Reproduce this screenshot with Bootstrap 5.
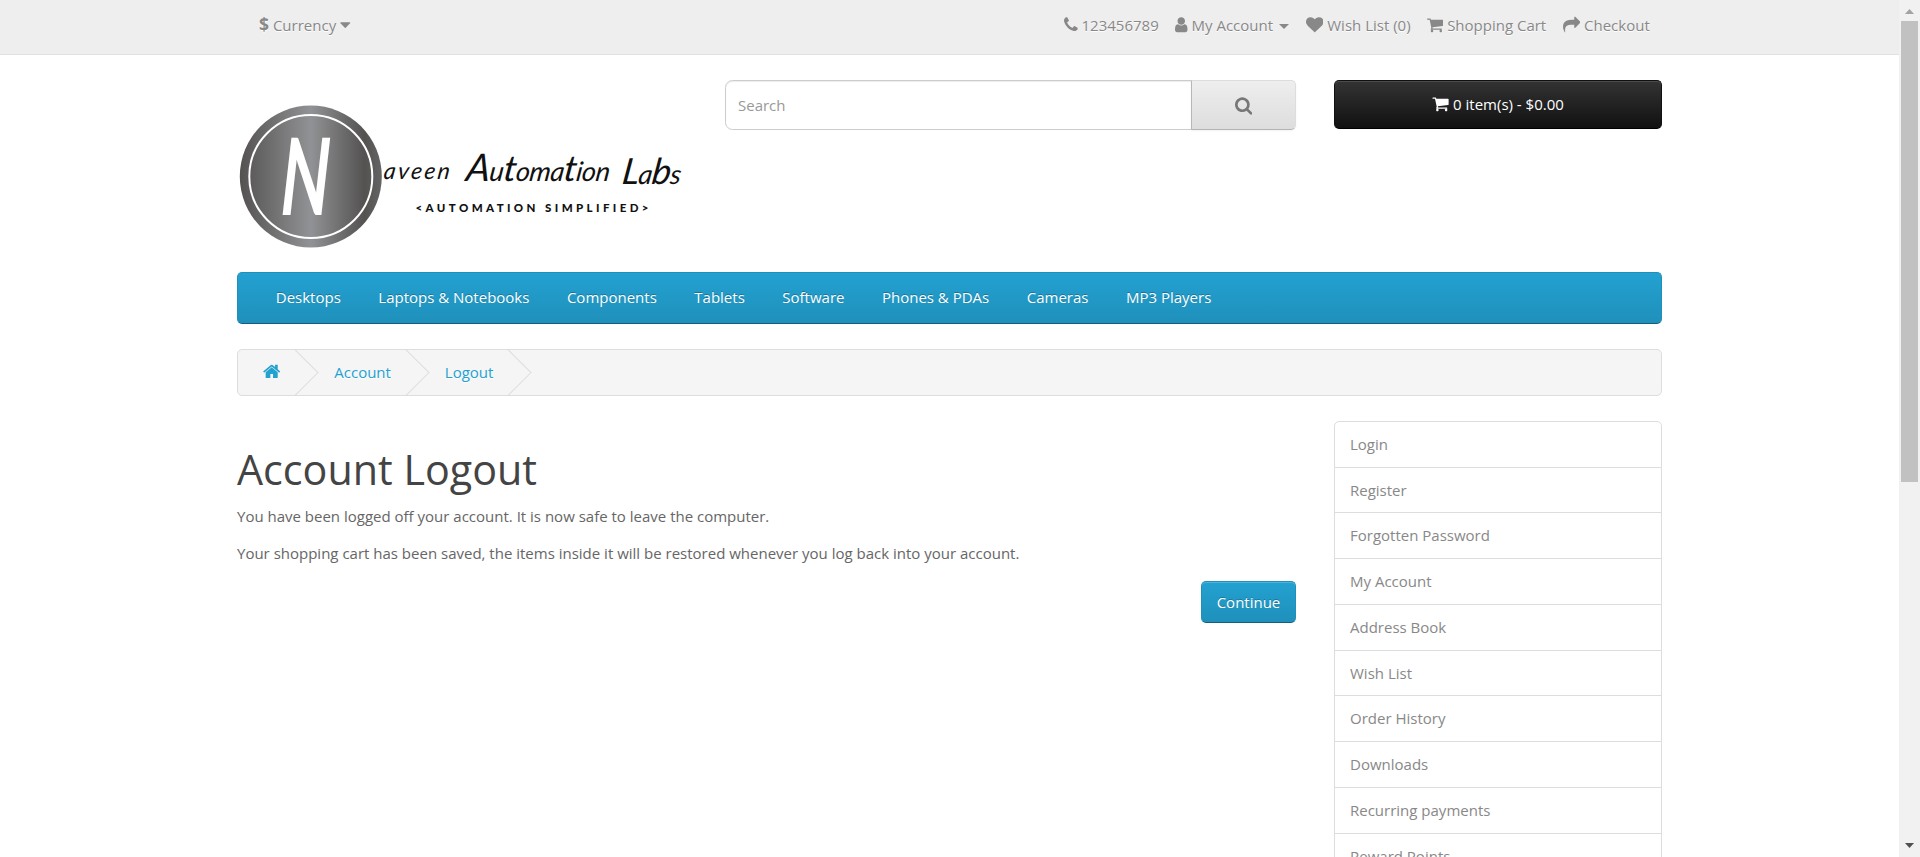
<!DOCTYPE html>
<html lang="en">
<head>
<meta charset="utf-8">
<title>Account Logout</title>
<meta name="viewport" content="width=device-width, initial-scale=1">
<link href="https://cdn.jsdelivr.net/npm/bootstrap@5.3.0/dist/css/bootstrap.min.css" rel="stylesheet">
<style>
  html, body { height: 100%; overflow: hidden; }
  body { font: 400 15px/20px "Open Sans", sans-serif; color: #666; background: #fff; }
  a { text-decoration: none; }
  .page { height: 857px; }
  .shop { width: 1425px; margin-left: 237px; }
  .fa { fill: currentColor; height: 17.5px; vertical-align: -2.5px; }
  .topbar { height: 55px; background: #eee; border-bottom: 1px solid #e2e2e2; color: #888; text-shadow: 0 1px 0 #fff; }
  .topbar a { color: #888; }
  .currency { padding: 14px 0 0 22px; }
  .currency strong { font-size: 17.5px; line-height: 20px; }
  .toplinks { padding: 15px 6px 0 0; }
  .toplinks li { display: inline-block; padding: 0 6.25px; }
  .caret-sm { display: inline-block; border: 5px solid transparent; border-top-color: #888; border-bottom: 0; margin-left: 2.5px; vertical-align: 2px; }
  .headrow { height: 192px; margin-top: 25px; }
  .logo { width: 450px; height: 150px; margin-top: 20px; }
  .search { width: 571px; height: 50px; margin-left: 38px; flex-wrap: nowrap; }
  .search .form-control { font-size: 15px; border: 1px solid #ccc; border-radius: 7.5px 0 0 7.5px; padding: 0 12px; box-shadow: inset 0 1px 1px rgba(0,0,0,.075); }
  .search .form-control::placeholder { color: #999; }
  .search .btn { width: 105px; border: 1px solid #ddd; border-color: #ddd #ddd #b3b3b3 #b7b7b7; border-radius: 0 5px 5px 0; color: #777; background: linear-gradient(#eee, #ddd); padding: 0; box-shadow: 0 1px 2px rgba(0,0,0,.05); }
  .search .fa { height: 18.75px; vertical-align: -3.5px; }
  .cartbtn { width: 328px; height: 49px; margin-left: 38px; padding: 0; font-size: 15px; color: #fff; border: 1px solid #111; border-bottom-color: #000; border-radius: 5px; background: linear-gradient(#333, #111); box-shadow: inset 0 1px 0 rgba(255,255,255,.12); }
  .cartbtn:hover { color: #fff; }
  .menu { height: 52px; padding: 0 19px; border: 1px solid #1f90bb; border-bottom-color: #145e7a; border-radius: 5px; background: linear-gradient(#23a1d1, #1f90bb); }
  .menu .nav-link { color: #fff; padding: 14px 18.75px; line-height: 20px; text-shadow: 0 -1px 0 rgba(0,0,0,.25); }
  .crumbs { height: 47px; margin: 25px 0 0; padding: 0; border: 1px solid #ddd; border-radius: 5px; background: #f5f5f5; overflow: hidden; list-style: none; }
  .crumbs li { position: relative; display: inline-block; padding: 0 25px; line-height: 45px; text-shadow: 0 1px 0 #fff; }
  .crumbs li::after { content: ""; position: absolute; right: -6.5px; top: 6.2px; width: 32.5px; height: 32.5px; border: 1px solid #ddd; border-width: 1px 1px 0 0; transform: rotate(45deg); }
  .crumbs a { color: #23a1d1; }
  .crumbs .fa { height: 18.75px; vertical-align: -3px; }
  .content-row { margin-top: 25.25px; }
  .maincol { width: 1059px; }
  h1 { font-size: 41.25px; line-height: 45px; font-weight: 400; color: #444; margin: 25.25px 0 14.5px; }
  .maincol p { margin: 0 0 17px; line-height: 20px; }
  .go { height: 42px; width: 95px; margin-top: 1px; padding: 0; font-size: 15px; color: #fff; border: 1px solid #1f90bb; border-bottom-color: #145e7a; border-radius: 5px; background: linear-gradient(#23a1d1, #1f90bb); box-shadow: inset 0 1px 0 rgba(255,255,255,.2); text-shadow: 0 -1px 0 rgba(0,0,0,.25); }
  .side { width: 328px; --bs-list-group-border-color: #ddd; --bs-list-group-border-radius: 5px; }
  .side .list-group-item { height: 45.75px; padding: 12px 15px; line-height: 21px; color: #888; }
  .side .list-group-item:first-child { height: 46.25px; }
  .scroller { width: 21px; background: #f1f1f1; }
  .thumb { width: 17px; height: 461px; background: #c1c1c1; }
</style>
</head>
<body>
<svg width="0" height="0" class="position-absolute">
  <defs>
    <symbol id="cart" viewBox="64 0 1664 1792"><path d="M704 1536q0 52-38 90t-90 38-90-38-38-90 38-90 90-38 90 38 38 90zm896 0q0 52-38 90t-90 38-90-38-38-90 38-90 90-38 90 38 38 90zm128-1088v512q0 24-16.5 42.5t-40.5 21.5l-1044 122q13 60 13 70 0 16-24 64h920q26 0 45 19t19 45-19 45-45 19h-1024q-26 0-45-19t-19-45q0-11 8-31.5t16-36 21.500-40 15.500-29.500l-177-823h-204q-26 0-45-19t-19-45 19-45 45-19h256q16 0 28.500 6.500t19.500 15.500 13 24.500 8 26 5.500 29.500 4.500 26h1201q26 0 45 19t19 45z"/></symbol>
  </defs>
</svg>
<div class="page d-flex">
  <div class="flex-grow-1 overflow-hidden">
    <nav class="topbar">
      <div class="shop d-flex justify-content-between">
        <div class="currency"><strong>$</strong> Currency <svg class="fa" width="10.5" viewBox="384 0 1024 1792"><path d="M1408 704q0 26-19 45l-448 448q-19 19-45 19t-45-19l-448-448q-19-19-19-45t19-45 45-19h896q26 0 45 19t19 45z"/></svg></div>
        <ul class="toplinks list-unstyled m-0">
          <li><a href="#"><svg class="fa" width="13.75" viewBox="192 0 1408 1792"><path d="M1600 1240q0 27-10 70.500t-21 68.500q-21 50-122 106-94 51-186 51-27 0-53-3.500t-57.500-12.500-47-14.500-55.500-20.500-49-18q-98-35-175-83-127-79-264-216t-216-264q-48-77-83-175-3-9-18-49t-20.500-55.500-14.500-47-12.500-57.500-3.500-53q0-92 51-186 56-101 106-122 25-11 68.500-21t70.500-10q14 0 21 3 18 6 53 76 11 19 30 54t35 63.500 31 53.500q3 4 17.500 25t21.500 35.500 7 28.500q0 20-28.500 50t-62 55-62 53-28.500 46q0 9 5 22.500t8.500 20.500 14 24 11.500 19q76 137 174 235t235 174q2 1 19 11.500t24 14 20.500 8.500 22.500 5q18 0 46-28.500t53-62 55-62 50-28.500q14 0 28.500 7t35.500 21.500 25 17.500q25 15 53.500 31t63.500 35 54 30q70 35 76 53 3 7 3 21z"/></svg></a> 123456789</li>
          <li><a href="#"><svg class="fa" width="12.5" viewBox="256 0 1280 1792"><path d="M1536 1399q0 109-62.500 187t-150.500 78h-854q-88 0-150.500-78t-62.500-187q0-85 8.500-160.500t31.500-152 58.500-131 94-89 134.500-34.500q131 128 313 128t313-128q76 0 134.500 34.500t94 89 58.500 131 31.500 152 8.500 160.500zm-256-887q0 159-112.500 271.500t-271.500 112.500-271.500-112.500-112.500-271.500 112.500-271.500 271.500-112.500 271.500 112.500 112.500 271.500z"/></svg> My Account <span class="caret-sm"></span></a></li>
          <li><a href="#"><svg class="fa" width="17.5" viewBox="0 0 1792 1792"><path d="M896 1664q-26 0-44-18l-624-602q-10-8-27.500-26t-55.500-65.500-68-97.500-53.500-121-23.500-138q0-220 127-344t351-124q62 0 126.500 21.500t120 58 95.500 68.500 76 68q36-36 76-68t95.500-68.500 120-58 126.500-21.500q224 0 351 124t127 344q0 221-229 450l-623 600q-18 18-44 18z"/></svg> Wish List (0)</a></li>
          <li><a href="#"><svg class="fa" width="16.25"><use href="#cart"/></svg> Shopping Cart</a></li>
          <li><a href="#"><svg class="fa" width="17.5" viewBox="0 0 1792 1792"><path d="M1792 640q0 26-19 45l-512 512q-19 19-45 19t-45-19-19-45v-256h-224q-98 0-175.500 6t-154 21.500-133 42.500-105.500 69.500-80 101-48.500 138.500-17.500 181q0 55 5 123 0 6 2.500 23.500t2.500 26.500q0 15-8.500 25t-23.500 10q-16 0-28-17-7-9-13-22t-13.500-30-10.500-24q-127-285-127-451 0-199 53-333 162-403 875-403h224v-256q0-26 19-45t45-19 45 19l512 512q19 19 19 45z"/></svg> Checkout</a></li>
        </ul>
      </div>
    </nav>
    <div class="shop">
      <header class="headrow d-flex align-items-start">
        <svg class="logo flex-shrink-0" viewBox="237 100 450 150">
          <defs><linearGradient id="steel"><stop offset="0" stop-color="#545251"/><stop offset=".5" stop-color="#919295"/><stop offset=".88" stop-color="#545251"/><stop offset="1" stop-color="#656464"/></linearGradient></defs>
          <circle cx="310.800" cy="176.500" r="71" fill="url(#steel)"/>
          <circle cx="310.800" cy="176.500" r="61.500" fill="none" stroke="#fff" stroke-width="2"/>
          <text transform="translate(280 215) skewX(-2) scale(.64 1)" font-family="Lato" font-style="italic" font-weight="700" font-size="107" fill="#fff">N</text>
          <g font-family="Lato" font-style="italic" font-weight="400" fill="#111">
            <text transform="translate(383 179) skewX(-8)" font-size="23" textLength="66" lengthAdjust="spacing">aveen</text>
            <text transform="translate(465 181) skewX(-8)" font-size="27" textLength="144" lengthAdjust="spacing"><tspan font-size="38">A</tspan>u<tspan font-size="36">t</tspan>oma<tspan font-size="36">t</tspan>ion</text>
            <text transform="translate(621 184) skewX(-8)" font-size="27" textLength="59" lengthAdjust="spacing"><tspan font-size="36">L</tspan>a<tspan font-size="36">b</tspan>s</text>
          </g>
          <text x="415.500" y="212" font-family="Lato" font-weight="900" font-size="11.500" fill="#111" textLength="233">&lt;AUTOMATION SIMPLIFIED&gt;</text>
        </svg>
        <div class="search input-group">
          <input class="form-control" type="text" placeholder="Search">
          <button class="btn" type="button" aria-label="Search"><svg class="fa" width="17.4" viewBox="64 0 1664 1792"><path d="M1216 832q0-185-131.500-316.500t-316.500-131.500-316.500 131.500-131.500 316.500 131.500 316.500 316.500 131.500 316.500-131.500 131.500-316.500zm512 832q0 52-38 90t-90 38q-54 0-90-38l-343-342q-179 124-399 124-143 0-273.500-55.500t-225-150-150-225-55.500-273.500 55.500-273.500 150-225 225-150 273.500-55.500 273.500 55.500 225 150 150 225 55.500 273.500q0 220-124 399l343 343q37 37 37 90z"/></svg></button>
        </div>
        <button class="btn cartbtn flex-shrink-0" type="button"><svg class="fa" width="17" height="18"><use href="#cart"/></svg> 0 item(s) - $0.00</button>
      </header>
      <nav class="menu nav">
        <a class="nav-link" href="#">Desktops</a>
        <a class="nav-link" href="#">Laptops &amp; Notebooks</a>
        <a class="nav-link" href="#">Components</a>
        <a class="nav-link" href="#">Tablets</a>
        <a class="nav-link" href="#">Software</a>
        <a class="nav-link" href="#">Phones &amp; PDAs</a>
        <a class="nav-link" href="#">Cameras</a>
        <a class="nav-link" href="#">MP3 Players</a>
      </nav>
      <ul class="crumbs">
        <li><a href="#" aria-label="Home"><svg class="fa" width="17.4" viewBox="64 0 1664 1792"><path d="M1472 992v480q0 26-19 45t-45 19h-384v-384h-256v384h-384q-26 0-45-19t-19-45v-480q0-1 .5-3t.5-3l575-474 575 474q1 2 1 6zm223-69l-62 74q-8 9-21 11h-3q-13 0-21-7l-692-577-692 577q-12 8-24 7-13-2-21-11l-62-74q-8-10-7-23.500t11-21.500l719-599q32-26 76-26t76 26l244 204v-195q0-14 9-23t23-9h192q14 0 23 9t9 23v408l219 182q10 8 11 21.500t-7 23.500z"/></svg></a></li>
        <li><a href="#">Account</a></li>
        <li><a href="#">Logout</a></li>
      </ul>
      <div class="content-row d-flex justify-content-between align-items-start">
        <main class="maincol">
          <h1>Account Logout</h1>
          <p>You have been logged off your account. It is now safe to leave the computer.</p>
          <p>Your shopping cart has been saved, the items inside it will be restored whenever you log back into your account.</p>
          <div class="d-flex justify-content-end"><a class="btn go d-flex align-items-center justify-content-center" href="#">Continue</a></div>
        </main>
        <aside class="side list-group">
          <a class="list-group-item" href="#">Login</a>
          <a class="list-group-item" href="#">Register</a>
          <a class="list-group-item" href="#">Forgotten Password</a>
          <a class="list-group-item" href="#">My Account</a>
          <a class="list-group-item" href="#">Address Book</a>
          <a class="list-group-item" href="#">Wish List</a>
          <a class="list-group-item" href="#">Order History</a>
          <a class="list-group-item" href="#">Downloads</a>
          <a class="list-group-item" href="#">Recurring payments</a>
          <a class="list-group-item" href="#">Reward Points</a>
        </aside>
      </div>
    </div>
  </div>
  <div class="scroller d-flex flex-column align-items-center flex-shrink-0">
    <svg width="21" height="21"><path d="M6 14h9l-4.500-5z" fill="#a3a3a3"/></svg>
    <div class="thumb"></div>
    <svg class="mt-auto" width="21" height="21"><path d="M6 7h9l-4.500 5z" fill="#505050"/></svg>
  </div>
</div>
<script src="https://cdn.jsdelivr.net/npm/bootstrap@5.3.0/dist/js/bootstrap.bundle.min.js"></script>
</body>
</html>
